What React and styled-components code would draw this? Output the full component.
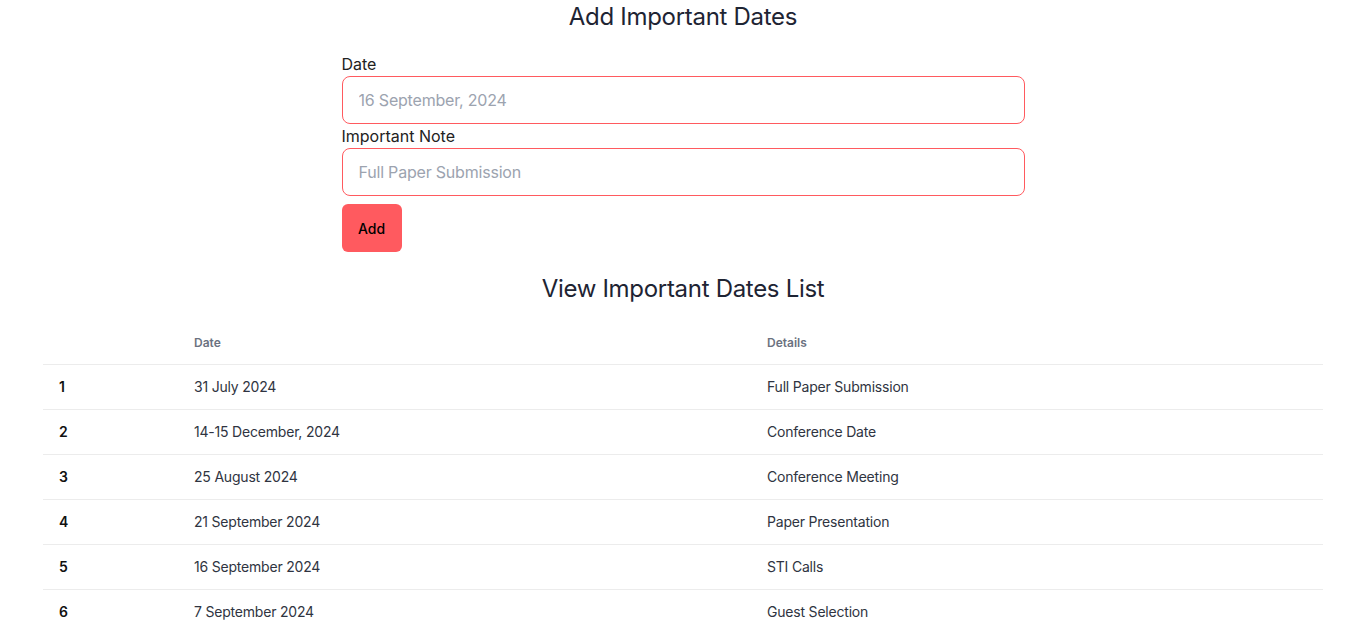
import React from "react"
import styled, { createGlobalStyle } from "styled-components"

const GlobalStyle = createGlobalStyle`
  body {
    margin: 0;
    background: #fff;
    font-family: Inter, "Noto Sans", sans-serif;
    color: #1f2937;
  }
`

const Page = styled.div`
  display: flex;
  flex-direction: column;
  align-items: center;
`

const Title = styled.h2`
  margin: 0 0 ${ p => p.gap }px;
  font-size: 24px;
  line-height: 34px;
  font-weight: 400;
  color: #1e2433;
  letter-spacing: -0.3px;
`

const Form = styled.form`
  width: 683px;
  display: flex;
  flex-direction: column;
  margin-bottom: 20px;
`

const Label = styled.label`
  font-size: 16px;
  line-height: 24px;
  color: #222;
`

const Input = styled.input`
  box-sizing: border-box;
  height: 48px;
  width: 100%;
  padding: 0 16px;
  border: 1px solid #ff5a5f;
  border-radius: 8px;
  font-family: inherit;
  font-size: 16px;
  letter-spacing: -0.2px;
  color: #222;
  outline: none;
  &::placeholder {
    color: #9ca3af;
  }
`

const AddButton = styled.button`
  align-self: flex-start;
  margin-top: 8px;
  width: 60px;
  height: 48px;
  border: none;
  border-radius: 6px;
  background: #ff5a5f;
  color: #000;
  font-family: inherit;
  font-size: 14px;
  font-weight: 500;
  cursor: pointer;
`

const Table = styled.table`
  width: 1280px;
  margin-top: 16px;
  border-collapse: collapse;
  table-layout: fixed;
  font-size: 14px;
  letter-spacing: -0.2px;
`

const Th = styled.th`
  box-sizing: border-box;
  text-align: left;
  padding: 0 16px;
  height: 42px;
  font-size: 12px;
  font-weight: 600;
  letter-spacing: 0;
  color: #6b7280;
  border-bottom: 1px solid #ececec;
  width: ${ p => p.w ? `${ p.w }px` : "auto" };
`

const Td = styled.td`
  padding: 0 16px;
  height: 44px;
  border-bottom: 1px solid #ececec;
  color: ${ p => p.strong ? "#111" : "#2f3441" };
  font-weight: ${ p => p.strong ? 600 : 400 };
`

const dates = [
  ["31 July 2024", "Full Paper Submission"],
  ["14-15 December, 2024", "Conference Date"],
  ["25 August 2024", "Conference Meeting"],
  ["21 September 2024", "Paper Presentation"],
  ["16 September 2024", "STI Calls"],
  ["7 September 2024", "Guest Selection"],
]

export default function App() {
  return (
    <Page>
      <GlobalStyle />
      <Title gap={ 18 }>Add Important Dates</Title>
      <Form onSubmit={ e => e.preventDefault() }>
        <Label>Date</Label>
        <Input placeholder="16 September, 2024" />
        <Label>Important Note</Label>
        <Input placeholder="Full Paper Submission" />
        <AddButton>Add</AddButton>
      </Form>
      <Title gap={ 0 }>View Important Dates List</Title>
      <Table>
        <thead>
          <tr>
            <Th w={ 135 }></Th>
            <Th w={ 573 }>Date</Th>
            <Th>Details</Th>
          </tr>
        </thead>
        <tbody>
          { dates.map(([date, note], i) =>
            <tr key={ i }>
              <Td strong>{ i + 1 }</Td>
              <Td>{ date }</Td>
              <Td>{ note }</Td>
            </tr>
          ) }
        </tbody>
      </Table>
    </Page>
  )
}
